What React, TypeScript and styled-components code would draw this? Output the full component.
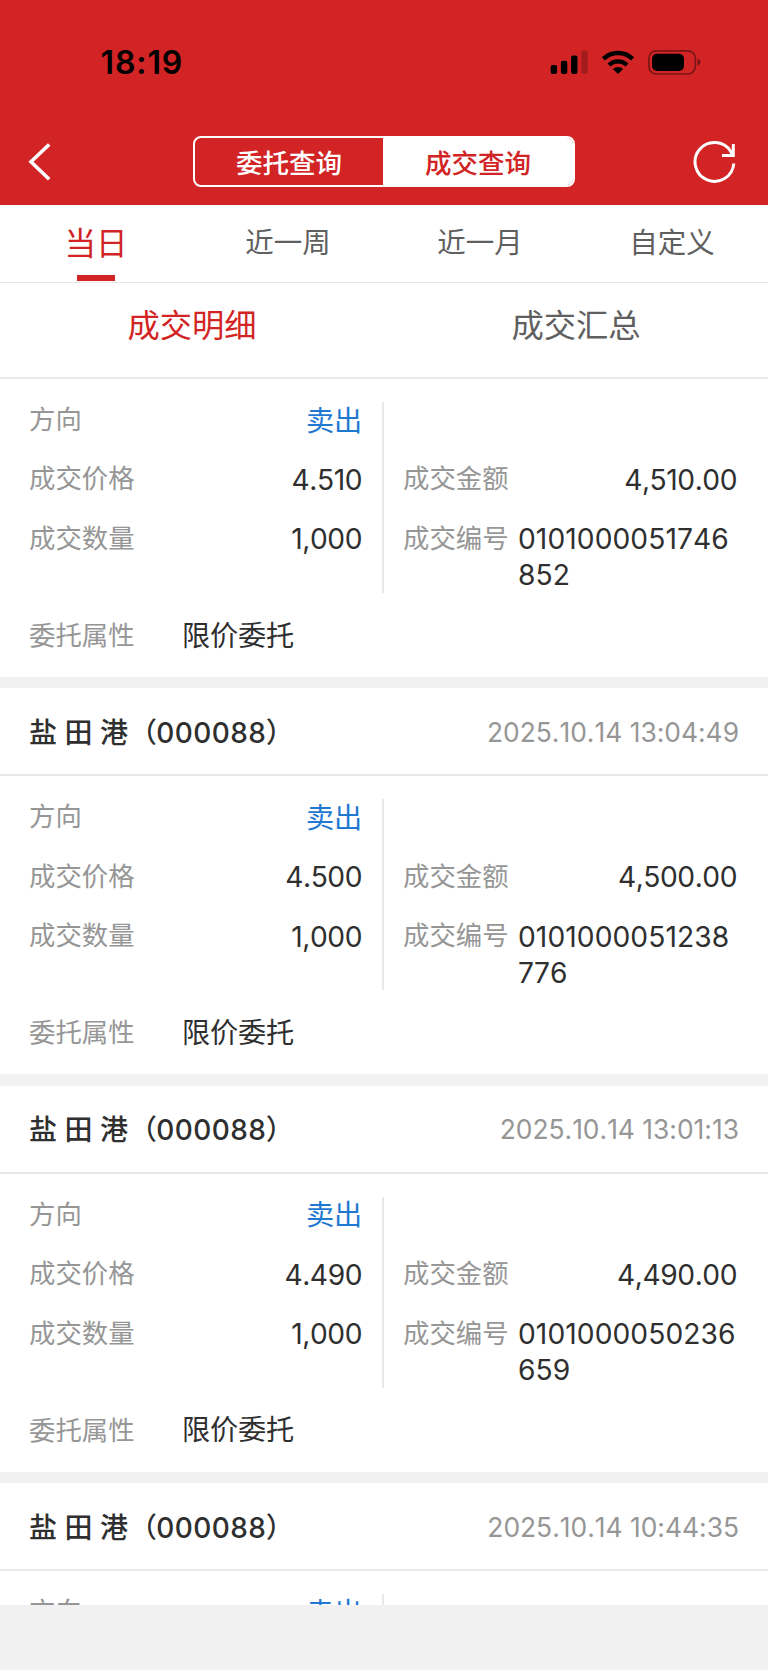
import React from "react";
import styled, { createGlobalStyle } from "styled-components";

const GlobalStyle = createGlobalStyle`
  * { box-sizing: border-box; }
  body {
    margin: 0;
    background: #f1f1f1;
    font-family: Inter, "Noto Sans CJK SC", sans-serif;
    font-kerning: none;
    font-feature-settings: "calt" 0;
    color: #2f2f2f;
  }
`;

const Screen = styled.div`
  width: 768px;
  height: 1670px;
  display: flex;
  flex-direction: column;
  overflow: hidden;
  background: #f1f1f1;
`;

const Header = styled.header`
  height: 204.5px;
  flex: none;
  background: #d22425;
`;

const StatusBar = styled.div`
  height: 124px;
  display: flex;
  justify-content: space-between;
  align-items: center;
  padding: 0 67px 0 100.5px;
`;

const Clock = styled.span`
  padding-top: 2px;
  font-size: 32px;
  line-height: 40px;
  font-weight: 600;
  letter-spacing: 0.9px;
  color: #000;
`;

const NavBar = styled.nav`
  height: 76px;
  display: flex;
  align-items: center;
  justify-content: space-between;
  padding: 0 32px 0 28px;
`;

const IconButton = styled.button`
  display: flex;
  width: 44px;
  padding: 0;
  border: 0;
  background: none;
  &:first-child { width: 48px; }
`;

const Segments = styled.div`
  display: flex;
  width: 382px;
  height: 51px;
  margin-bottom: 1px;
  border: 2px solid #fff;
  border-radius: 8px;
  overflow: hidden;
`;

const Segment = styled.div<{ $active?: boolean }>`
  flex: ${(p) => (p.$active ? "1" : "0 0 188px")};
  text-align: center;
  font-size: 26.5px;
  line-height: 50px;
  font-weight: 500;
  color: ${(p) => (p.$active ? "#d22425" : "#fff")};
  background: ${(p) => (p.$active ? "#fff" : "transparent")};
`;

const Tabs = styled.div`
  flex: none;
  height: 78.5px;
  display: flex;
  background: #fff;
  border-bottom: 1px solid #e6e6e6;
`;

const Tab = styled.div<{ $active?: boolean }>`
  flex: 1;
  display: flex;
  flex-direction: column;
  align-items: center;
  justify-content: space-between;
  padding-top: 14px;
  font-size: ${(p) => (p.$active ? 31.5 : 28.5)}px;
  line-height: ${(p) => (p.$active ? 49 : 48)}px;
  color: ${(p) => (p.$active ? "#d22425" : "#5f5f5f")};
  &::after {
    content: "";
    width: 38.5px;
    height: 6px;
    margin-bottom: 1px;
    background: ${(p) => (p.$active ? "#d22425" : "transparent")};
  }
`;

const SubTabs = styled.div`
  flex: none;
  height: 96px;
  display: flex;
  background: #fff;
  border-bottom: 2px solid #e8e8e8;
`;

const SubTab = styled.div<{ $active?: boolean }>`
  flex: 1;
  text-align: center;
  font-size: 32.3px;
  line-height: 86px;
  color: ${(p) => (p.$active ? "#d22425" : "#5f5f5f")};
`;

const List = styled.main`
  flex: none;
  height: 1226px;
  overflow: hidden;
`;

const Card = styled.article`
  background: #fff;
  margin-bottom: 11.4px;
`;

const CardHead = styled.header`
  height: 88px;
  display: flex;
  justify-content: space-between;
  align-items: center;
  padding: 0 29px;
  border-bottom: 2px solid #e8e8e8;
`;

const Stock = styled.h2`
  margin: 0;
  padding-top: 3px;
  font-size: 28px;
  line-height: 40px;
  font-weight: 500;
`;

const Code = styled.span`
  letter-spacing: 0.4px;
`;

const Paren = styled.span<{ $close?: boolean }>`
  margin: ${(p) => (p.$close ? "0 0 0 -0.5px" : "0 -1px 0 1px")};
`;

const Time = styled.time`
  padding-top: 1px;
  font-size: 26.4px;
  line-height: 40px;
  color: #969696;
`;

const CardBody = styled.div`
  height: 298px;
  padding: 23px 31px 24px 29px;
  display: flex;
  flex-direction: column;
  justify-content: space-between;
`;

const Columns = styled.div`
  display: flex;
  height: 191px;
`;

const Column = styled.div<{ $divided?: boolean }>`
  width: ${(p) => (p.$divided ? 355 : 353)}px;
  padding: ${(p) => (p.$divided ? "0 20px 0 0" : "0 0 0 19px")};
  border-right: ${(p) => (p.$divided ? "2px solid #e8e8e8" : "0")};
  display: flex;
  flex-direction: column;
  gap: 23.4px;
`;

const Row = styled.div`
  display: flex;
  align-items: flex-start;
  height: 36px;
`;

const Label = styled.span<{ $low?: boolean }>`
  flex: none;
  width: 115px;
  font-size: 26.4px;
  line-height: ${(p) => (p.$low ? 37 : 35.6)}px;
  color: #969696;
`;

const Value = styled.span<{ $sell?: boolean; $wrap?: boolean }>`
  flex: 1;
  padding-top: 0.6px;
  font-size: 28.2px;
  line-height: 36px;
  letter-spacing: ${(p) => (p.$wrap ? "0.07px" : p.$sell ? "-0.2px" : "-0.45px")};
  text-align: ${(p) => (p.$wrap ? "left" : "right")};
  word-break: break-all;
  color: ${(p) => (p.$sell ? "#1f78d1" : "#2f2f2f")};
`;

const Attribute = styled(Value)`
  text-align: left;
  padding: 0.6px 0 0 38px;
  letter-spacing: -0.2px;
`;

const Footer = styled.footer`
  flex: 1;
  background: #f1f1f1;
`;

type Trade = {
  time?: string;
  price: string;
  amount: string;
  serial: string;
};

const trades: Trade[] = [
  { price: "4.510", amount: "4,510.00", serial: "0101000051746852" },
  { time: "2025.10.14 13:04:49", price: "4.500", amount: "4,500.00", serial: "0101000051238776" },
  { time: "2025.10.14 13:01:13", price: "4.490", amount: "4,490.00", serial: "0101000050236659" },
  { time: "2025.10.14 10:44:35", price: "", amount: "", serial: "" },
];

const StatusIcons = () => (
  <svg width="151" height="26" viewBox="550 49 151 26">
    <rect x="550.7" y="65" width="6.4" height="9" rx="2" />
    <rect x="560.9" y="60.8" width="6.4" height="13.2" rx="2" />
    <rect x="571.1" y="55.4" width="6.4" height="18.6" rx="2" />
    <rect x="581.3" y="50.5" width="6.4" height="23.5" rx="2" opacity="0.22" />
    <g fill="none" stroke="#000" strokeWidth="4.4">
      <path d="M603.4 58.8A21.2 21.2 0 0 1 632.6 58.8" />
      <path d="M609 65A13 13 0 0 1 627 65" />
    </g>
    <path d="M618 74L612.9 69A7.3 7.3 0 0 1 623.1 69Z" />
    <rect x="648.9" y="50.8" width="46.4" height="23.2" rx="7.5" fill="none" stroke="#000" strokeWidth="1.7" opacity="0.42" />
    <rect x="652" y="53.8" width="32" height="17.2" rx="5" />
    <path d="M697.6 58.4Q700.4 60 700.4 62.2T697.6 66Z" opacity="0.48" />
  </svg>
);

const BackIcon = () => (
  <svg width="24" height="40" viewBox="28 142 24 40" fill="none" stroke="#fff" strokeWidth="3.6">
    <path d="M49.2 144.5L31 161.8L49.2 179.2" />
  </svg>
);

const RefreshIcon = () => (
  <svg width="44" height="44" viewBox="692 140 44 44" fill="none" stroke="#fff" strokeWidth="3">
    <path d="M733.8 163.5A19.4 19.4 0 1 1 730.8 151.5L732.6 155.6M733.3 144V155.6H722" />
  </svg>
);

const TradeCard = ({ trade }: { trade: Trade }) => (
  <Card>
    {trade.time && (
      <CardHead>
        <Stock>
          盐 田 港
          <Code>
            <Paren>（</Paren>000088<Paren $close>）</Paren>
          </Code>
        </Stock>
        <Time>{trade.time}</Time>
      </CardHead>
    )}
    <CardBody>
      <Columns>
        <Column $divided>
          <Row>
            <Label>方向</Label>
            <Value $sell>卖出</Value>
          </Row>
          {trade.price && (
            <>
              <Row>
                <Label>成交价格</Label>
                <Value>{trade.price}</Value>
              </Row>
              <Row>
                <Label>成交数量</Label>
                <Value>1,000</Value>
              </Row>
            </>
          )}
        </Column>
        {trade.price && (
          <Column>
            <Row />
            <Row>
              <Label>成交金额</Label>
              <Value>{trade.amount}</Value>
            </Row>
            <Row>
              <Label>成交编号</Label>
              <Value $wrap>{trade.serial}</Value>
            </Row>
          </Column>
        )}
      </Columns>
      {trade.price && (
        <Row>
          <Label $low>委托属性</Label>
          <Attribute>限价委托</Attribute>
        </Row>
      )}
    </CardBody>
  </Card>
);

export default function App() {
  return (
    <Screen>
      <GlobalStyle />
      <Header>
        <StatusBar>
          <Clock>18:19</Clock>
          <StatusIcons />
        </StatusBar>
        <NavBar>
          <IconButton aria-label="返回">
            <BackIcon />
          </IconButton>
          <Segments>
            <Segment>委托查询</Segment>
            <Segment $active>成交查询</Segment>
          </Segments>
          <IconButton aria-label="刷新">
            <RefreshIcon />
          </IconButton>
        </NavBar>
      </Header>
      <Tabs>
        <Tab $active>当日</Tab>
        <Tab>近一周</Tab>
        <Tab>近一月</Tab>
        <Tab>自定义</Tab>
      </Tabs>
      <SubTabs>
        <SubTab $active>成交明细</SubTab>
        <SubTab>成交汇总</SubTab>
      </SubTabs>
      <List>
        {trades.map((trade, i) => (
          <TradeCard key={i} trade={trade} />
        ))}
      </List>
      <Footer />
    </Screen>
  );
}
